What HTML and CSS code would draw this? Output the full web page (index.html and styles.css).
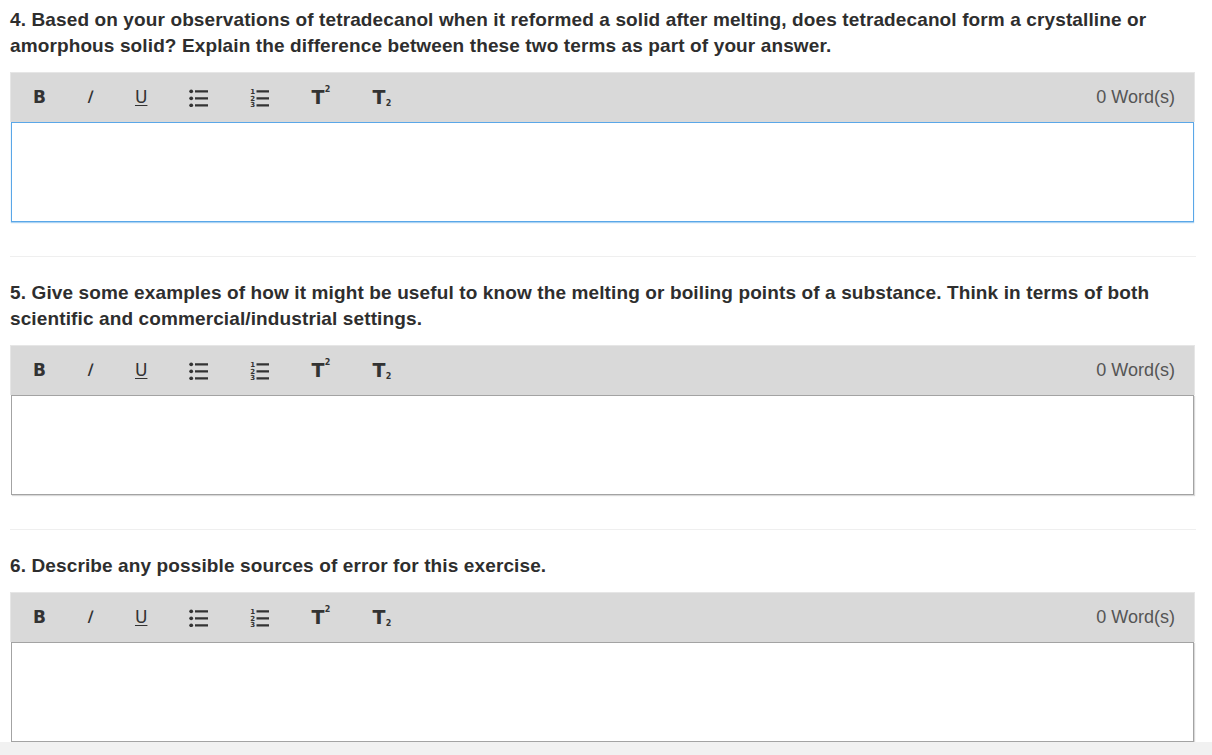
FILE: index.html
```html
<!DOCTYPE html>
<html lang="en">
<head>
<meta charset="utf-8">
<title>Questions</title>
<link rel="stylesheet" href="styles.css">
</head>
<body>
<main class="page">
  <section class="question">
    <p class="prompt">4. Based on your observations of tetradecanol when it reformed a solid after melting, does tetradecanol form a crystalline or amorphous solid? Explain the difference between these two terms as part of your answer.</p>
    <div class="editor">
      <div class="toolbar">
        <div class="tools">
          <span class="tool tool-b">B</span>
          <span class="tool tool-i">I</span>
          <span class="tool tool-u">U</span>
          <svg class="tool ico" width="19" height="18" viewBox="0 0 19 18"><circle cx="2.2" cy="2.3" r="1.9"/><circle cx="2.2" cy="9.3" r="1.9"/><circle cx="2.2" cy="16.3" r="1.9"/><path d="M6 2.3H19M6 9.3H19M6 16.3H19" stroke-width="2.2"/></svg>
          <svg class="tool ico" width="19" height="20" viewBox="0 0 19 20"><text x="0.3" y="6.2" class="num">1</text><text x="0.3" y="12.6" class="num">2</text><text x="0.3" y="19" class="num">3</text><path d="M6.5 3.3H19M6.5 10.3H19M6.5 17.3H19" stroke-width="2.2"/></svg>
          <span class="tool tool-t">T<span class="sup">2</span></span>
          <span class="tool tool-t">T<span class="sub">2</span></span>
        </div>
        <span class="count">0 Word(s)</span>
      </div>
      <div class="area focused"></div>
    </div>
  </section>
  <hr class="sep">
  <section class="question">
    <p class="prompt">5. Give some examples of how it might be useful to know the melting or boiling points of a substance. Think in terms of both scientific and commercial/industrial settings.</p>
    <div class="editor">
      <div class="toolbar">
        <div class="tools">
          <span class="tool tool-b">B</span>
          <span class="tool tool-i">I</span>
          <span class="tool tool-u">U</span>
          <svg class="tool ico" width="19" height="18" viewBox="0 0 19 18"><circle cx="2.2" cy="2.3" r="1.9"/><circle cx="2.2" cy="9.3" r="1.9"/><circle cx="2.2" cy="16.3" r="1.9"/><path d="M6 2.3H19M6 9.3H19M6 16.3H19" stroke-width="2.2"/></svg>
          <svg class="tool ico" width="19" height="20" viewBox="0 0 19 20"><text x="0.3" y="6.2" class="num">1</text><text x="0.3" y="12.6" class="num">2</text><text x="0.3" y="19" class="num">3</text><path d="M6.5 3.3H19M6.5 10.3H19M6.5 17.3H19" stroke-width="2.2"/></svg>
          <span class="tool tool-t">T<span class="sup">2</span></span>
          <span class="tool tool-t">T<span class="sub">2</span></span>
        </div>
        <span class="count">0 Word(s)</span>
      </div>
      <div class="area"></div>
    </div>
  </section>
  <hr class="sep">
  <section class="question">
    <p class="prompt">6. Describe any possible sources of error for this exercise.</p>
    <div class="editor">
      <div class="toolbar">
        <div class="tools">
          <span class="tool tool-b">B</span>
          <span class="tool tool-i">I</span>
          <span class="tool tool-u">U</span>
          <svg class="tool ico" width="19" height="18" viewBox="0 0 19 18"><circle cx="2.2" cy="2.3" r="1.9"/><circle cx="2.2" cy="9.3" r="1.9"/><circle cx="2.2" cy="16.3" r="1.9"/><path d="M6 2.3H19M6 9.3H19M6 16.3H19" stroke-width="2.2"/></svg>
          <svg class="tool ico" width="19" height="20" viewBox="0 0 19 20"><text x="0.3" y="6.2" class="num">1</text><text x="0.3" y="12.6" class="num">2</text><text x="0.3" y="19" class="num">3</text><path d="M6.5 3.3H19M6.5 10.3H19M6.5 17.3H19" stroke-width="2.2"/></svg>
          <span class="tool tool-t">T<span class="sup">2</span></span>
          <span class="tool tool-t">T<span class="sub">2</span></span>
        </div>
        <span class="count">0 Word(s)</span>
      </div>
      <div class="area"></div>
    </div>
  </section>
</main>
</body>
</html>
```

FILE: styles.css
```css
html, body {
  margin: 0;
  padding: 0;
}

body {
  background: #f1f1f1;
  font-family: "Liberation Sans", Arial, sans-serif;
  color: #333;
}

.page {
  background: #fff;
  padding: 7px 17px 0 10px;
}

.prompt {
  margin: 0 0 13px 0;
  font-size: 19px;
  line-height: 26px;
  letter-spacing: 0.12px;
  font-weight: bold;
  color: #2e2e2e;
}

.editor {
  display: flex;
  flex-direction: column;
}

.toolbar {
  height: 49px;
  background: #d9d9d9;
  border: 1px solid #e6e6e6;
  border-bottom: none;
  display: flex;
  align-items: center;
  justify-content: space-between;
  padding: 0 19px 0 22px;
}

.tools {
  display: flex;
  align-items: center;
  gap: 42px;
}

.tool {
  display: inline-flex;
  align-items: center;
  color: #333;
  font-family: "DejaVu Sans", sans-serif;
  line-height: 1;
}

.tool-b {
  font-size: 17px;
  font-weight: bold;
}

.tool-i {
  font-size: 17px;
  font-style: italic;
  font-weight: normal;
  transform: skewX(-8deg);
}

.tool-u {
  font-size: 17px;
  text-decoration: underline;
  text-underline-offset: 2px;
  font-weight: normal;
}

.ico {
  fill: #333;
  stroke: #333;
}

.ico circle {
  stroke: none;
}

.ico .num {
  font-family: "DejaVu Sans", sans-serif;
  font-size: 7px;
  font-weight: bold;
  stroke: none;
  fill: #333;
}

.tool-t {
  position: relative;
  font-size: 19px;
  font-weight: bold;
  padding-right: 6px;
}

.sup,
.sub {
  position: absolute;
  right: 0;
  font-size: 8px;
  font-weight: bold;
}

.sup {
  top: -2px;
}

.sub {
  bottom: -1px;
}

.count {
  font-family: "Liberation Sans", Arial, sans-serif;
  font-size: 18px;
  color: #555;
}

.area {
  height: 98px;
  margin: 0 1px;
  background: #fff;
  border: 1px solid #a3a3a3;
  box-shadow: 1px 1px 1px rgba(0, 0, 0, 0.15);
}

.area.focused {
  border-color: #5aa7e8;
  box-shadow: 0 1px 1px rgba(90, 167, 232, 0.5);
}

.sep {
  margin: 34px -1px 23px 0;
  border: none;
  border-top: 1px solid #efefef;
  height: 0;
}
```
